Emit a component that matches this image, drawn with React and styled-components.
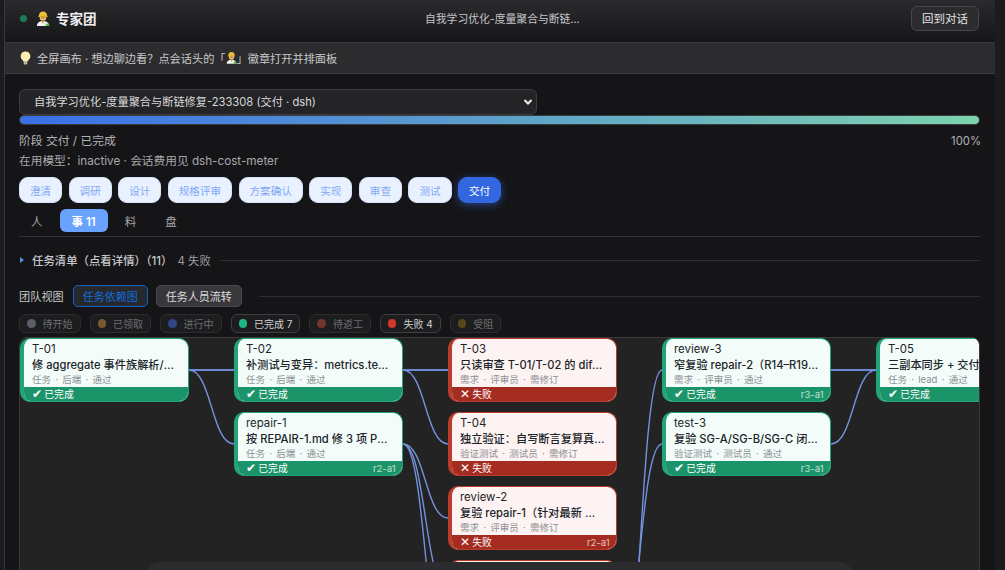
import React from 'react'
import styled, { createGlobalStyle } from 'styled-components'

const GlobalStyle = createGlobalStyle`
  html, body, #root { margin: 0; height: 100%; }
  body {
    background: #1c1c1e;
    overflow: hidden;
    font-family: Inter, "Noto Sans CJK SC", "DejaVu Sans", sans-serif;
    color: #c8c8cc;
  }
  * { box-sizing: border-box; }
`

const CARD_W = 169
const CARD_H = 64
const COL_STEP = 214
const ROW_STEP = 74

const Page = styled.div`
  position: relative;
  height: 100vh;
  overflow: hidden;
  display: flex;
  padding: 0 10px 0 4px;
`
const Panel = styled.div`
  flex: 1;
  min-width: 0;
  border-left: 1px solid #38383b;
  background: #151517;
  display: flex;
  flex-direction: column;
`
const Header = styled.header`
  flex: none;
  height: 43px;
  display: grid;
  grid-template-columns: 1fr auto 1fr;
  align-items: center;
  padding: 0 16px 6px 15px;
  background: linear-gradient(#2b2b2e, #161618);
  border-bottom: 1px solid #3a3a3d;
`
const Brand = styled.div`
  display: flex;
  align-items: center;
  gap: 6px;
  font-size: 13.5px;
  font-weight: 600;
  color: #f0f0f2;
`
const StatusDot = styled.span`
  width: 7px;
  height: 7px;
  margin-right: 3px;
  border-radius: 50%;
  background: #1f7a5a;
`
const SessionTitle = styled.div`
  width: 158px;
  margin-left: 9px;
  font-size: 10.8px;
  color: #c4c4c8;
  white-space: nowrap;
  overflow: hidden;
  text-overflow: ellipsis;
`
const BackButton = styled.button`
  justify-self: end;
  height: 25px;
  width: 68px;
  padding: 0;
  font: inherit;
  font-size: 11.5px;
  color: #e2e2e4;
  background: #2c2c2f;
  border: 1px solid #48484b;
  border-radius: 6px;
`
const Banner = styled.div`
  flex: none;
  height: 31px;
  display: flex;
  align-items: center;
  gap: 6px;
  padding: 0 15px;
  font-size: 11.2px;
  color: #c8c8cc;
  background: #2c2c2e;
  border-bottom: 1px solid #3a3a3d;
`
const BannerText = styled.span`
  display: inline-flex;
  align-items: center;
`
const Body = styled.main`
  flex: 1;
  min-height: 0;
  padding: 15px 15px 0 14px;
  display: flex;
  flex-direction: column;
  > * { flex-shrink: 0; }
`
const SelectWrap = styled.div`
  position: relative;
  width: 518px;
  height: 26px;
`
const SessionSelect = styled.select`
  appearance: none;
  display: block;
  width: 100%;
  height: 100%;
  padding: 0 24px 0 14px;
  font: inherit;
  font-size: 11.2px;
  color: #d8d8da;
  background: #242426;
  border: 1px solid #3c3c3f;
  border-radius: 6px;
`
const Chevron = styled.svg`
  position: absolute;
  right: 4px;
  top: 9px;
  width: 10px;
  height: 8px;
  pointer-events: none;
`
const Progress = styled.div`
  height: 10px;
  border-radius: 5px;
  border: 1px solid #3a3a3d;
  background: linear-gradient(90deg, #3b6fe8, #7dd3ae);
`
const ProgressMeta = styled.div`
  display: flex;
  justify-content: space-between;
  margin-top: 8px;
  font-size: 11.8px;
  line-height: 16px;
  color: #b2b2b6;
`
const Percent = styled.span`
  font-size: 11.3px;
  margin-right: -1px;
`
const ModelLine = styled.div`
  margin-top: 4px;
  font-size: 11.7px;
  line-height: 16px;
  color: #a8a8ac;
`
const Steps = styled.div`
  display: flex;
  gap: 6.4px;
  margin-top: 8px;
`
const Step = styled.span`
  height: 26px;
  padding: 0 10px;
  display: flex;
  align-items: center;
  font-size: 10.6px;
  border-radius: 9px;
  color: ${p => (p.$active ? '#fff' : '#7ea8f6')};
  background: ${p => (p.$active ? '#3367e0' : '#e9f1ff')};
  border: 1px solid ${p => (p.$active ? '#3367e0' : '#d5e3fb')};
  box-shadow: ${p => (p.$active ? '0 2px 8px rgba(51,103,224,.55)' : 'none')};
`
const Tabs = styled.div`
  display: flex;
  gap: 5px;
  margin-top: 6px;
  padding-bottom: 4px;
  border-bottom: 1px solid #333336;
`
const Tab = styled.span`
  height: 23px;
  padding: 0 12px;
  display: flex;
  align-items: center;
  font-size: 11.5px;
  border-radius: 6px;
  font-weight: ${p => (p.$active ? 600 : 400)};
  color: ${p => (p.$active ? '#fff' : '#a6a6aa')};
  background: ${p => (p.$active ? '#6aa3ff' : 'transparent')};
`
const Disclosure = styled.div`
  display: flex;
  align-items: center;
  height: 16px;
  margin-top: 15px;
  font-size: 11.4px;
`
const Caret = styled.span`
  width: 0;
  height: 0;
  margin: 0 8px 0 1px;
  border-left: 4px solid #5b8ee8;
  border-top: 3px solid transparent;
  border-bottom: 3px solid transparent;
`
const DisclosureTitle = styled.span`
  font-weight: 500;
  color: #c8c8cc;
`
const DisclosureCount = styled.span`
  margin-left: 5px;
  color: #9c9ca0;
`
const Rule = styled.span`
  flex: 1;
  height: 1px;
  margin-left: 9px;
  background: #2e2e31;
`
const TeamRow = styled.div`
  display: flex;
  align-items: center;
  gap: 8px;
  margin-top: 17px;
  height: 22px;
  font-size: 11px;
  color: #c8c8cc;
`
const TeamLabel = styled.span`
  margin-right: 1px;
  font-size: 11.2px;
`
const ViewButton = styled.button`
  height: 22px;
  padding: 0 9px;
  font: inherit;
  font-size: 11px;
  border-radius: 5px;
  color: ${p => (p.$active ? '#0f6fdc' : '#dcdcde')};
  background: ${p => (p.$active ? '#26282c' : '#38383b')};
  border: 1px solid ${p => (p.$active ? '#0a62c4' : '#4a4a4d')};
`
const Chips = styled.div`
  display: flex;
  gap: 9px;
  margin-top: 7px;
`
const Chip = styled.span`
  height: 19px;
  padding: 0 7px;
  display: flex;
  align-items: center;
  gap: 7px;
  font-size: 10px;
  color: ${p => (p.$on ? '#d0d0d2' : '#6e6e72')};
  background: #1d1d1f;
  border: 1px solid ${p => (p.$on ? '#3e3e41' : '#2c2c2e')};
  border-radius: 6px;
`
const ChipDot = styled.i`
  width: 8.5px;
  height: 8.5px;
  border-radius: 50%;
  background: ${p => p.$color};
  opacity: ${p => (p.$on ? 1 : 0.55)};
`
const Canvas = styled.div`
  position: relative;
  height: 480px;
  margin-top: 4px;
  overflow: hidden;
  background: #232323;
  border: 1px solid #3a3a3d;
  border-radius: 8px 8px 0 0;
`
const EdgeLayer = styled.svg`
  position: absolute;
  left: 0;
  top: 0;
`
const Node = styled.div`
  position: absolute;
  left: ${p => p.$col * COL_STEP}px;
  top: ${p => p.$row * ROW_STEP}px;
  width: ${CARD_W}px;
  height: ${CARD_H}px;
  display: flex;
  flex-direction: column;
  overflow: hidden;
  border-radius: 10px;
  border: 1.5px solid ${p => (p.$failed ? '#b93c2d' : '#22a47a')};
  border-left-width: 4px;
  background: ${p => (p.$failed ? '#fdf3f2' : '#f3fcf9')};
`
const NodeBody = styled.div`
  flex: 1;
  min-height: 0;
  padding: 2.5px 10px 0 8px;
`
const NodeId = styled.div`
  font-size: 11.4px;
  line-height: 15px;
  color: #20242a;
`
const NodeTitle = styled.div`
  font-size: 11.2px;
  font-weight: 500;
  line-height: 16px;
  color: #20242a;
  white-space: nowrap;
  overflow: hidden;
  text-overflow: ellipsis;
`
const NodeMeta = styled.div`
  font-size: 9.5px;
  line-height: 14px;
  word-spacing: 1.6px;
  color: #8c9094;
  white-space: nowrap;
`
const NodeFoot = styled.div`
  flex: none;
  height: 14px;
  padding: 0 6.5px 0 8px;
  display: flex;
  align-items: center;
  justify-content: space-between;
  font-size: 9.8px;
  color: #fff;
  background: ${p => (p.$failed ? '#a52c20' : '#1c9469')};
`
const FootMark = styled.span`
  display: inline-block;
  width: 12.3px;
  font-size: 12px;
  font-weight: 700;
  line-height: 1;
`
const Round = styled.span`
  font-size: 9.5px;
  opacity: 0.7;
`
const Dock = styled.div`
  position: absolute;
  left: 146px;
  top: 562px;
  width: 707px;
  height: 40px;
  background: #2c2c2e;
  border-radius: 14px 14px 0 0;
`

function WorkerIcon({ size = 14 }) {
  return (
    <svg width={size} height={size * 1.2} viewBox="0 0 16 18">
      <path d="M1 18c0-4 3-6 7-6s7 2 7 6z" fill="#f2f4f5" />
      <path d="M11 15h4v3h-4z" fill="#62b94a" />
      <path d="M6 12l2 3 2-3z" fill="#d8a24a" />
      <circle cx="8" cy="8" r="3.8" fill="#f2c072" />
      <path d="M3.2 6.6C3.2 3 5.2 1 8 1s4.800 2 4.800 5.600z" fill="#eec13a" />
      <rect x="2.600" y="6" width="10.800" height="1.400" rx=".7" fill="#d9a428" />
      <rect x="6" y="8" width="4" height="1" fill="#8a5a2a" />
    </svg>
  )
}

function BulbIcon() {
  return (
    <svg width="11" height="14" viewBox="0 0 11 14">
      <path d="M5.500 0.500a4.800 4.800 0 0 0-2.800 8.700c.5.400.7.900.7 1.500h4.200c0-.6.2-1.100.7-1.500a4.800 4.800 0 0 0-2.800-8.700z" fill="#fbeeb0" />
      <rect x="3.600" y="11" width="3.800" height="2.600" rx="1" fill="#b9b9b4" />
    </svg>
  )
}

const stages = ['澄清', '调研', '设计', '规格评审', '方案确认', '实现', '审查', '测试', '交付']

const filters = [
  { label: '待开始', color: '#8a94a0' },
  { label: '已领取', color: '#c08a3c' },
  { label: '进行中', color: '#3f68d8' },
  { label: '已完成 7', color: '#1fb582', on: true },
  { label: '待返工', color: '#b84a38' },
  { label: '失败 4', color: '#cf3a2c', on: true },
  { label: '受阻', color: '#8a6a10' },
]

const nodes = [
  { id: 'T-01', col: 0, row: 0, title: '修 aggregate 事件族解析/聚合口径与断链', meta: '任务 · 后端 · 通过' },
  { id: 'T-02', col: 1, row: 0, title: '补测试与变异：metrics.test 与断链场景', meta: '任务 · 后端 · 通过' },
  { id: 'repair-1', col: 1, row: 1, title: '按 REPAIR-1.md 修 3 项 P0 问题并回归', meta: '任务 · 后端 · 通过', round: 'r2-a1' },
  { id: 'T-03', col: 2, row: 0, failed: true, title: '只读审查 T-01/T-02 的 diff 与口径', meta: '需求 · 评审员 · 需修订' },
  { id: 'T-04', col: 2, row: 1, failed: true, title: '独立验证：自写断言复算真实数据结果', meta: '验证测试 · 测试员 · 需修订' },
  { id: 'review-2', col: 2, row: 2, failed: true, title: '复验 repair-1（针对最新 提交与改动）', meta: '需求 · 评审员 · 需修订', round: 'r2-a1' },
  { id: 'test-2', col: 2, row: 3, failed: true, title: '复验 repair-1 闭环', meta: '验证测试 · 测试员 · 需修订', round: 'r2-a1' },
  { id: 'review-3', col: 3, row: 0, title: '窄复验 repair-2（R14–R19 与回归范围）', meta: '需求 · 评审员 · 通过', round: 'r3-a1' },
  { id: 'test-3', col: 3, row: 1, title: '复验 SG-A/SG-B/SG-C 闭环与回归', meta: '验证测试 · 测试员 · 通过', round: 'r3-a1' },
  { id: 'T-05', col: 4, row: 0, title: '三副本同步 + 交付说明与验收归档记录', meta: '任务 · lead · 通过' },
]

// [from col, from row, to col, to row]
const edges = [
  [0, 0, 1, 0], [0, 0, 1, 0], [0, 0, 1, 1],
  [1, 0, 2, 0], [1, 0, 2, 0], [1, 0, 2, 1],
  [1, 1, 2, 2], [1, 1, 2, 3], [1, 1, 2, 4],
  [2, 4, 3, 1], [2, 5, 3, 0],
  [3, 0, 4, 0], [3, 0, 4, 0], [3, 1, 4, 0],
]

function edgePath([c1, r1, c2, r2]) {
  const x1 = c1 * COL_STEP + CARD_W
  const x2 = c2 * COL_STEP
  const y1 = r1 * ROW_STEP + CARD_H / 2
  const y2 = r2 * ROW_STEP + CARD_H / 2
  const mid = (x1 + x2) / 2
  return `M${x1} ${y1}C${mid} ${y1} ${mid} ${y2} ${x2} ${y2}`
}

function TaskNode({ node }) {
  return (
    <Node $col={node.col} $row={node.row} $failed={node.failed}>
      <NodeBody>
        <NodeId>{node.id}</NodeId>
        <NodeTitle>{node.title}</NodeTitle>
        <NodeMeta>{node.meta}</NodeMeta>
      </NodeBody>
      <NodeFoot $failed={node.failed}>
        <span>
          <FootMark>{node.failed ? '✕' : '✔'}</FootMark>
          {node.failed ? '失败' : '已完成'}
        </span>
        {node.round && <Round>{node.round}</Round>}
      </NodeFoot>
    </Node>
  )
}

export default function App() {
  return (
    <Page>
      <GlobalStyle />
      <Panel>
        <Header>
          <Brand>
            <StatusDot />
            <WorkerIcon />
            专家团
          </Brand>
          <SessionTitle>自我学习优化-度量聚合与断链修复-233308</SessionTitle>
          <BackButton>回到对话</BackButton>
        </Header>
        <Banner>
          <BulbIcon />
          <BannerText>
            全屏画布 · 想边聊边看？点会话头的「<WorkerIcon size={11} />」徽章打开并排面板
          </BannerText>
        </Banner>
        <Body>
          <SelectWrap>
            <SessionSelect defaultValue="233308">
              <option value="233308">自我学习优化-度量聚合与断链修复-233308 (交付 · dsh)</option>
            </SessionSelect>
            <Chevron viewBox="0 0 10 8">
              <path d="M1.500 2l3.500 3.500L8.500 2" fill="none" stroke="#f0f0f0" strokeWidth="2" />
            </Chevron>
          </SelectWrap>
          <Progress />
          <ProgressMeta>
            <span>阶段 交付 / 已完成</span>
            <Percent>100%</Percent>
          </ProgressMeta>
          <ModelLine>在用模型：inactive · 会话费用见 dsh-cost-meter</ModelLine>
          <Steps>
            {stages.map(s => (
              <Step key={s} $active={s === '交付'}>{s}</Step>
            ))}
          </Steps>
          <Tabs>
            <Tab>人</Tab>
            <Tab $active>事 11</Tab>
            <Tab>料</Tab>
            <Tab>盘</Tab>
          </Tabs>
          <Disclosure>
            <Caret />
            <DisclosureTitle>任务清单（点看详情）（11）</DisclosureTitle>
            <DisclosureCount>4 失败</DisclosureCount>
            <Rule />
          </Disclosure>
          <TeamRow>
            <TeamLabel>团队视图</TeamLabel>
            <ViewButton $active>任务依赖图</ViewButton>
            <ViewButton>任务人员流转</ViewButton>
            <Rule />
          </TeamRow>
          <Chips>
            {filters.map(f => (
              <Chip key={f.label} $on={f.on}>
                <ChipDot $color={f.color} $on={f.on} />
                {f.label}
              </Chip>
            ))}
          </Chips>
          <Canvas>
            <EdgeLayer width="961" height="480">
              {edges.map((e, i) => (
                <path key={i} d={edgePath(e)} fill="none" stroke="#7391dc" strokeWidth="1.4" />
              ))}
            </EdgeLayer>
            {nodes.map(n => (
              <TaskNode key={n.id} node={n} />
            ))}
          </Canvas>
        </Body>
      </Panel>
      <Dock />
    </Page>
  )
}
